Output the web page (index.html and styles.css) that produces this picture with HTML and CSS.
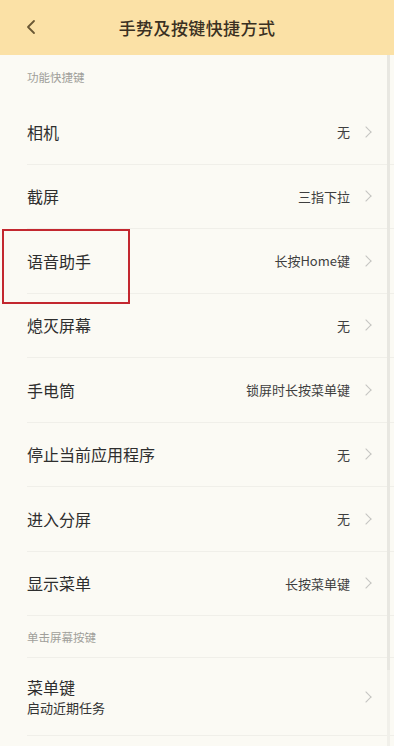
FILE: index.html
```html
<!DOCTYPE html>
<html lang="zh">
<head>
<meta charset="utf-8">
<link rel="stylesheet" href="styles.css">
</head>
<body>
<div class="screen">
  <header class="topbar">
    <svg class="back" width="12" height="16" viewBox="0 0 12 16"><path d="M9 2 L3 8 L9 14" fill="none" stroke="#6a5834" stroke-width="1.8" stroke-linecap="round" stroke-linejoin="round"/></svg>
    <h1 class="title">手势及按键快捷方式</h1>
  </header>
  <main class="list">
    <div class="section">功能快捷键</div>
    <div class="row"><span class="label">相机</span><span class="value">无</span><span class="chev"></span></div>
    <div class="row"><span class="label">截屏</span><span class="value">三指下拉</span><span class="chev"></span></div>
    <div class="row"><span class="label">语音助手</span><span class="value">长按Home键</span><span class="chev"></span></div>
    <div class="row"><span class="label">熄灭屏幕</span><span class="value">无</span><span class="chev"></span></div>
    <div class="row"><span class="label">手电筒</span><span class="value">锁屏时长按菜单键</span><span class="chev"></span></div>
    <div class="row"><span class="label">停止当前应用程序</span><span class="value">无</span><span class="chev"></span></div>
    <div class="row"><span class="label">进入分屏</span><span class="value">无</span><span class="chev"></span></div>
    <div class="row"><span class="label">显示菜单</span><span class="value">长按菜单键</span><span class="chev"></span></div>
    <div class="section small">单击屏幕按键</div>
    <div class="row tall"><div class="stack"><span class="label">菜单键</span><span class="sub">启动近期任务</span></div><span class="chev"></span></div>
  </main>
  <div class="highlight"></div>
  <div class="scrollbar"><div class="thumb"></div></div>
</div>
</body>
</html>
```
FILE: styles.css
```css
* { box-sizing: border-box; margin: 0; padding: 0; }
html, body { width: 394px; height: 746px; overflow: hidden; }
body {
  background: #fbfaf4;
  font-family: "Noto Sans CJK SC", "Noto Sans", sans-serif;
  color: #2b2b2b;
}
.screen { position: relative; width: 394px; height: 746px; overflow: hidden; }
.topbar {
  height: 55px;
  background: #fbe1a6;
  display: flex;
  align-items: center;
  justify-content: center;
  position: relative;
}
.back { position: absolute; left: 25px; top: 19px; }
.title {
  font-size: 17px;
  font-weight: 500;
  color: #3a3022;
  letter-spacing: 0.4px;
}
.list { display: flex; flex-direction: column; }
.section {
  height: 45px;
  padding-left: 27px;
  display: flex;
  align-items: center;
  font-size: 11.5px;
  color: #a09f9a;
  border-bottom: 1px solid transparent;
}
.section.small {
  height: 42px;
  margin-left: 27px;
  padding-left: 0;
  border-bottom: 1px solid #f0efe9;
}
.row {
  height: 64.5px;
  margin-left: 27px;
  padding-right: 22px;
  display: flex;
  align-items: center;
  border-bottom: 1px solid #f0efe9;
}
.row.tall { height: 78px; }
.label { font-size: 16px; color: #2e2e2e; flex: 1; }
.value { font-size: 13px; color: #3e3e3e; margin-right: 12px; }
.chev {
  width: 8px; height: 8px;
  border-top: 1.5px solid #c4c4c0;
  border-right: 1.5px solid #c4c4c0;
  transform: rotate(45deg);
  margin-right: 2px;
}
.stack { display: flex; flex-direction: column; flex: 1; gap: 1px; }
.stack .label { line-height: 21px; }
.sub { font-size: 13px; color: #333; line-height: 18px; }
.highlight {
  position: absolute;
  left: 2px; top: 229px;
  width: 128px; height: 75px;
  border: 2.5px solid #c3272f;
}
.scrollbar {
  position: absolute;
  right: 4px; top: 55px;
  width: 3px; height: 691px;
  background: #f1f0ea;
}
.thumb { height: 615px; background: #e8e7e1; }
```
